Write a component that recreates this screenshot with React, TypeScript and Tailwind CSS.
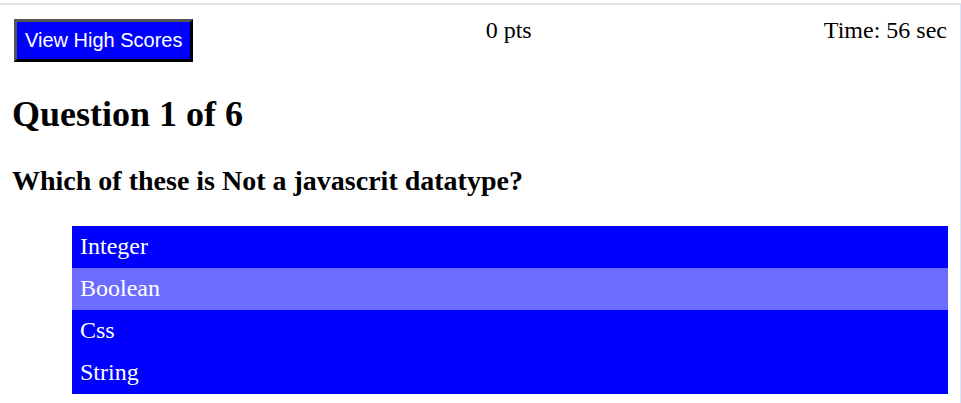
import { useState } from "react";

const answers = ["Integer", "Boolean", "Css", "String"];

export default function App() {
  const [hovered, setHovered] = useState<number | null>(1);
  const [score] = useState(0);
  const [time] = useState(56);

  return (
    <div className="h-[403px] w-[961px] bg-white pt-[3px] font-['Liberation_Serif',serif] text-black">
      <div className="h-[400px] border-t-2 border-r border-t-[#e3e3e3] border-r-[#d8e5ff]">
        <div className="pl-[12px] pr-[12px]">
          <header className="flex items-start justify-between pt-[12px] pr-[1px] text-[24px] leading-[27px]">
            <button className="ml-[2px] mt-[2px] flex h-[43px] items-center border-[3px] border-t-[#555] border-l-[#555] border-b-black border-r-black bg-[#0000ff] px-[8px] font-['Liberation_Sans',sans-serif] text-[20px] leading-[23px] text-white">
              View High Scores
            </button>
            <span>{score} pts</span>
            <span>Time: {time} sec</span>
          </header>

          <h1 className="mt-[32px] text-[36px] font-bold leading-[41px]">Question 1 of 6</h1>
          <h2 className="mt-[30px] text-[28px] font-bold leading-[32px]">
            Which of these is Not a javascrit datatype?
          </h2>

          <ul className="ml-[60px] mt-[29px]">
            {answers.map((answer, i) => (
              <li
                key={answer}
                onMouseEnter={() => setHovered(i)}
                className={
                  "px-[8px] pt-[6px] pb-[8px] text-[24px] leading-[28px] text-white " +
                  (hovered === i ? "bg-[#6c6cff]" : "bg-[#0000ff]")
                }
              >
                {answer}
              </li>
            ))}
          </ul>
        </div>
      </div>
    </div>
  );
}
